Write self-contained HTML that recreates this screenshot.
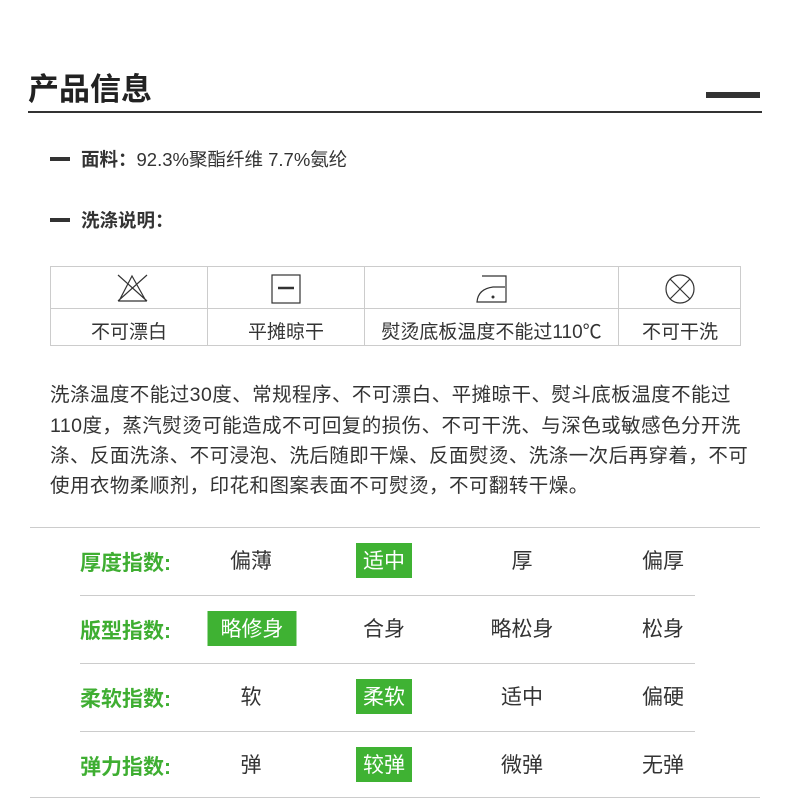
<!DOCTYPE html>
<html><head><meta charset="utf-8"><style>
body{margin:0;width:790px;height:799px;background:#fff;position:relative;font-family:"Liberation Sans","Noto Sans CJK SC",sans-serif;color:#333;overflow:hidden}
.a{position:absolute;white-space:nowrap}
.t{position:absolute;left:50px;top:266px;width:691px;height:80px;border:1px solid #ccc;box-sizing:border-box}
.c{position:absolute;text-align:center;font-size:19px;color:#333}
.l{position:absolute;height:1px;background:#ccc}
.g{font-size:21px;font-weight:bold;color:#3fae32}
.v{position:absolute;font-size:21px;text-align:center;transform:translateX(-50%);height:35px;padding:0 5px;color:#333;box-sizing:border-box;padding-top:3px;line-height:32px}
.on{background:#3fb233;color:#fff}
.p{position:absolute;left:50px;font-size:19.5px;white-space:nowrap;letter-spacing:0.45px}
</style></head><body>
<div class="a" style="left:28px;top:64px;font-size:31px;font-weight:bold;color:#222">产品信息</div>
<div class="a" style="left:28px;top:111px;width:734px;height:2px;background:#333"></div>
<div class="a" style="left:706px;top:92px;width:54px;height:6px;background:#333"></div>
<div class="a" style="left:50px;top:157px;width:20px;height:4px;background:#333"></div>
<div class="a" style="left:81px;top:146px;font-size:18.5px"><b>面料：</b>92.3%聚酯纤维 7.7%氨纶</div>
<div class="a" style="left:50px;top:218px;width:20px;height:4px;background:#333"></div>
<div class="a" style="left:81px;top:207px;font-size:18.5px;font-weight:bold">洗涤说明：</div>
<div class="t">
<div class="l" style="left:0;right:0;top:41px"></div>
<div class="l" style="left:156px;top:0;width:1px;height:78px"></div>
<div class="l" style="left:313px;top:0;width:1px;height:78px"></div>
<div class="l" style="left:567px;top:0;width:1px;height:78px"></div>
<svg style="position:absolute;left:0;top:0" width="690" height="42" fill="none" stroke="#333" stroke-width="1.2">
<path d="M67 8 L96 34 M96 8 L67 34 M81 9 L68 34 L95 34 Z"/>
<rect x="221" y="8" width="28" height="28"/><path d="M227 21 H243" stroke-width="2.5"/>
<path d="M431 9 H455 V35 H426 Q427 22 442 20 H454"/><circle cx="442" cy="30" r="0.9" fill="#333"/>
<circle cx="629" cy="22" r="14"/><path d="M619 12 L639 32 M639 12 L619 32"/>
</svg>
<div class="c" style="left:0;width:156px;top:50px">不可漂白</div>
<div class="c" style="left:157px;width:156px;top:50px">平摊晾干</div>
<div class="c" style="left:314px;width:253px;top:50px">熨烫底板温度不能过110℃</div>
<div class="c" style="left:568px;width:122px;top:50px">不可干洗</div>
</div>
<div class="p" style="top:378px">洗涤温度不能过30度、常规程序、不可漂白、平摊晾干、熨斗底板温度不能过</div>
<div class="p" style="top:409px">110度，蒸汽熨烫可能造成不可回复的损伤、不可干洗、与深色或敏感色分开洗</div>
<div class="p" style="top:439px">涤、反面洗涤、不可浸泡、洗后随即干燥、反面熨烫、洗涤一次后再穿着，不可</div>
<div class="p" style="top:469px">使用衣物柔顺剂，印花和图案表面不可熨烫，不可翻转干燥。</div>
<div class="l" style="left:30px;width:730px;top:527px"></div>
<div class="l" style="left:80px;width:615px;top:595px"></div>
<div class="l" style="left:80px;width:615px;top:663px"></div>
<div class="l" style="left:80px;width:615px;top:731px"></div>
<div class="l" style="left:30px;width:730px;top:797px"></div>
<div class="a g" style="left:80px;top:547px">厚度指数:</div>
<div class="v" style="left:251px;top:543px">偏薄</div><div class="v on" style="left:384px;top:543px;padding:3px 7px 0">适中</div><div class="v" style="left:522px;top:543px">厚</div><div class="v" style="left:663px;top:543px">偏厚</div>
<div class="a g" style="left:80px;top:615px">版型指数:</div>
<div class="v on" style="left:252px;top:611px;padding:3px 13px 0">略修身</div><div class="v" style="left:384px;top:611px">合身</div><div class="v" style="left:522px;top:611px">略松身</div><div class="v" style="left:663px;top:611px">松身</div>
<div class="a g" style="left:80px;top:683px">柔软指数:</div>
<div class="v" style="left:251px;top:679px">软</div><div class="v on" style="left:384px;top:679px;padding:3px 7px 0">柔软</div><div class="v" style="left:522px;top:679px">适中</div><div class="v" style="left:663px;top:679px">偏硬</div>
<div class="a g" style="left:80px;top:751px">弹力指数:</div>
<div class="v" style="left:251px;top:747px">弹</div><div class="v on" style="left:384px;top:747px;padding:3px 7px 0">较弹</div><div class="v" style="left:522px;top:747px">微弹</div><div class="v" style="left:663px;top:747px">无弹</div>
</body></html>
